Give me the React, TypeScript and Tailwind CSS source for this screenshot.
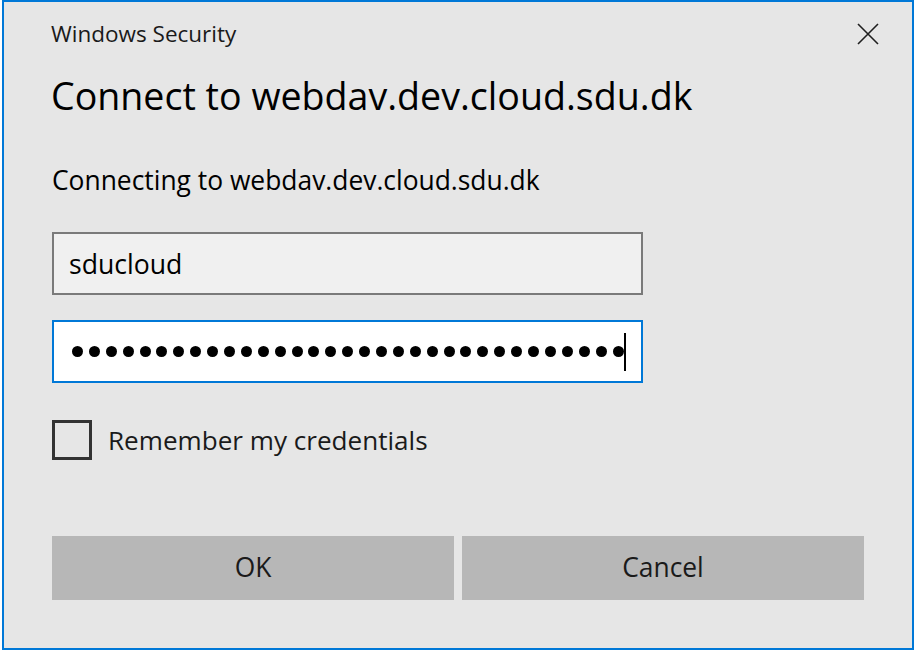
import React from "react";

const font = { fontFamily: '"Open Sans", "Noto Sans", "Liberation Sans", sans-serif' };

const DOTS = Array.from({ length: 33 });

const CloseIcon = () => (
  <svg width="22" height="22" viewBox="0 0 22 22" fill="none">
    <path d="M1 1 L21 21 M21 1 L1 21" stroke="#1f1f1f" strokeWidth="1.6" />
  </svg>
);

const App: React.FC = () => {
  return (
    <div className="w-[920px] h-[652px] bg-white overflow-hidden" style={font}>
      <div className="ml-[2px] w-[912px] h-[650px] border-2 border-[#0078d7] bg-[#e6e6e6] flex flex-col px-[48px] text-black">
        {/* title bar */}
        <div className="mt-[12px] h-[40px] flex items-center justify-between">
          <span className="-ml-[1px] text-[22.5px] leading-[40px] text-[#1a1a1a]">Windows Security</span>
          <button className="-mr-[15px] w-[22px] h-[22px] flex items-center justify-center">
            <CloseIcon />
          </button>
        </div>

        <h1 className="mt-[20px] h-[44px] -ml-[1px] text-[37.6px] leading-[44px] font-normal whitespace-nowrap">
          Connect to webdav.dev.cloud.sdu.dk
        </h1>

        <p className="mt-[46px] h-[32px] text-[26.4px] leading-[32px] whitespace-nowrap">
          Connecting to webdav.dev.cloud.sdu.dk
        </p>

        {/* user name */}
        <div className="mt-[36px] w-[591px] h-[63px] border-2 border-[#7a7a7a] bg-[#f0f0f0] flex items-center pl-[15px]">
          <span className="text-[26.6px] leading-[32px]">sducloud</span>
        </div>

        {/* password */}
        <div className="mt-[25px] w-[591px] h-[63px] border-2 border-[#0078d7] bg-white flex items-center pl-[18px]">
          <div className="flex items-center gap-[5.9px]">
            {DOTS.map((_, i) => (
              <span key={i} className="w-[11px] h-[11px] rounded-full bg-black" />
            ))}
          </div>
          <span className="ml-[0px] w-[2px] h-[38px] bg-black" />
        </div>

        {/* remember */}
        <label className="mt-[37px] h-[40px] flex items-center gap-[16px]">
          <span className="w-[40px] h-[40px] border-[3px] border-[#333333]" />
          <span className="text-[26.1px] leading-[32px] text-[#1a1a1a]">Remember my credentials</span>
        </label>

        {/* buttons */}
        <div className="mt-[76px] grid grid-cols-2 gap-[8px]">
          <button className="h-[64px] bg-[#b7b7b7] text-[26.4px] text-[#1a1a1a]">OK</button>
          <button className="h-[64px] bg-[#b7b7b7] text-[26.4px] text-[#1a1a1a]">Cancel</button>
        </div>
      </div>
    </div>
  );
};

export default App;
